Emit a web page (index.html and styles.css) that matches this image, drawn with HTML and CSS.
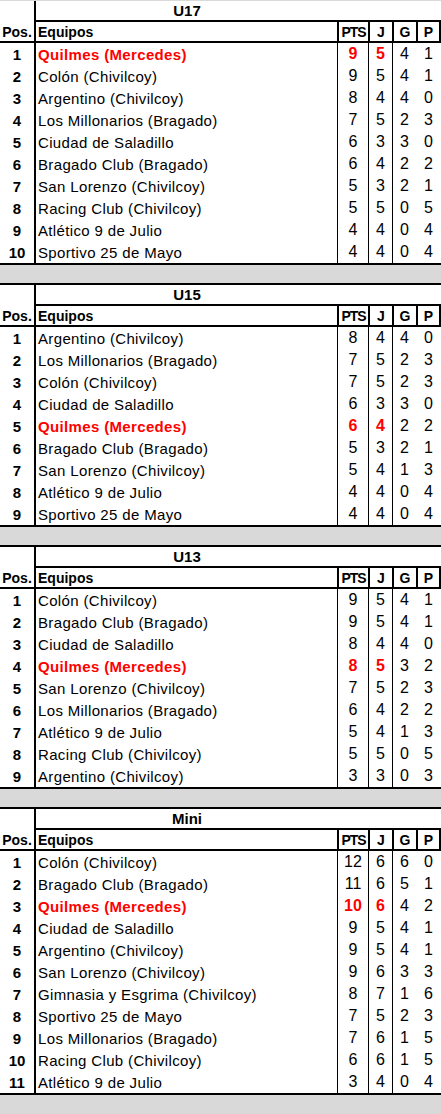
FILE: index.html
```html
<!DOCTYPE html>
<html lang="es">
<head>
<meta charset="utf-8">
<title>Posiciones</title>
<link rel="stylesheet" href="styles.css">
</head>
<body>
<div class="band band-top"></div>

<section class="table first">
  <div class="row title-row"><div class="pos"></div><div class="title">U17</div></div>
  <div class="row head-row"><div class="pos">Pos.</div><div class="name">Equipos</div><div class="num pts">PTS</div><div class="num">J</div><div class="num">G</div><div class="num last">P</div></div>
  <div class="row hl"><div class="pos">1</div><div class="name">Quilmes (Mercedes)</div><div class="num">9</div><div class="num">5</div><div class="num">4</div><div class="num">1</div></div>
  <div class="row"><div class="pos">2</div><div class="name">Colón (Chivilcoy)</div><div class="num">9</div><div class="num">5</div><div class="num">4</div><div class="num">1</div></div>
  <div class="row"><div class="pos">3</div><div class="name">Argentino (Chivilcoy)</div><div class="num">8</div><div class="num">4</div><div class="num">4</div><div class="num">0</div></div>
  <div class="row"><div class="pos">4</div><div class="name">Los Millonarios (Bragado)</div><div class="num">7</div><div class="num">5</div><div class="num">2</div><div class="num">3</div></div>
  <div class="row"><div class="pos">5</div><div class="name">Ciudad de Saladillo</div><div class="num">6</div><div class="num">3</div><div class="num">3</div><div class="num">0</div></div>
  <div class="row"><div class="pos">6</div><div class="name">Bragado Club (Bragado)</div><div class="num">6</div><div class="num">4</div><div class="num">2</div><div class="num">2</div></div>
  <div class="row"><div class="pos">7</div><div class="name">San Lorenzo (Chivilcoy)</div><div class="num">5</div><div class="num">3</div><div class="num">2</div><div class="num">1</div></div>
  <div class="row"><div class="pos">8</div><div class="name">Racing Club (Chivilcoy)</div><div class="num">5</div><div class="num">5</div><div class="num">0</div><div class="num">5</div></div>
  <div class="row"><div class="pos">9</div><div class="name">Atlético 9 de Julio</div><div class="num">4</div><div class="num">4</div><div class="num">0</div><div class="num">4</div></div>
  <div class="row"><div class="pos">10</div><div class="name">Sportivo 25 de Mayo</div><div class="num">4</div><div class="num">4</div><div class="num">0</div><div class="num">4</div></div>
</section>
<div class="band"></div>

<section class="table">
  <div class="row title-row"><div class="pos"></div><div class="title">U15</div></div>
  <div class="row head-row"><div class="pos">Pos.</div><div class="name">Equipos</div><div class="num pts">PTS</div><div class="num">J</div><div class="num">G</div><div class="num last">P</div></div>
  <div class="row"><div class="pos">1</div><div class="name">Argentino (Chivilcoy)</div><div class="num">8</div><div class="num">4</div><div class="num">4</div><div class="num">0</div></div>
  <div class="row"><div class="pos">2</div><div class="name">Los Millonarios (Bragado)</div><div class="num">7</div><div class="num">5</div><div class="num">2</div><div class="num">3</div></div>
  <div class="row"><div class="pos">3</div><div class="name">Colón (Chivilcoy)</div><div class="num">7</div><div class="num">5</div><div class="num">2</div><div class="num">3</div></div>
  <div class="row"><div class="pos">4</div><div class="name">Ciudad de Saladillo</div><div class="num">6</div><div class="num">3</div><div class="num">3</div><div class="num">0</div></div>
  <div class="row hl"><div class="pos">5</div><div class="name">Quilmes (Mercedes)</div><div class="num">6</div><div class="num">4</div><div class="num">2</div><div class="num">2</div></div>
  <div class="row"><div class="pos">6</div><div class="name">Bragado Club (Bragado)</div><div class="num">5</div><div class="num">3</div><div class="num">2</div><div class="num">1</div></div>
  <div class="row"><div class="pos">7</div><div class="name">San Lorenzo (Chivilcoy)</div><div class="num">5</div><div class="num">4</div><div class="num">1</div><div class="num">3</div></div>
  <div class="row"><div class="pos">8</div><div class="name">Atlético 9 de Julio</div><div class="num">4</div><div class="num">4</div><div class="num">0</div><div class="num">4</div></div>
  <div class="row"><div class="pos">9</div><div class="name">Sportivo 25 de Mayo</div><div class="num">4</div><div class="num">4</div><div class="num">0</div><div class="num">4</div></div>
</section>
<div class="band"></div>

<section class="table">
  <div class="row title-row"><div class="pos"></div><div class="title">U13</div></div>
  <div class="row head-row"><div class="pos">Pos.</div><div class="name">Equipos</div><div class="num pts">PTS</div><div class="num">J</div><div class="num">G</div><div class="num last">P</div></div>
  <div class="row"><div class="pos">1</div><div class="name">Colón (Chivilcoy)</div><div class="num">9</div><div class="num">5</div><div class="num">4</div><div class="num">1</div></div>
  <div class="row"><div class="pos">2</div><div class="name">Bragado Club (Bragado)</div><div class="num">9</div><div class="num">5</div><div class="num">4</div><div class="num">1</div></div>
  <div class="row"><div class="pos">3</div><div class="name">Ciudad de Saladillo</div><div class="num">8</div><div class="num">4</div><div class="num">4</div><div class="num">0</div></div>
  <div class="row hl"><div class="pos">4</div><div class="name">Quilmes (Mercedes)</div><div class="num">8</div><div class="num">5</div><div class="num">3</div><div class="num">2</div></div>
  <div class="row"><div class="pos">5</div><div class="name">San Lorenzo (Chivilcoy)</div><div class="num">7</div><div class="num">5</div><div class="num">2</div><div class="num">3</div></div>
  <div class="row"><div class="pos">6</div><div class="name">Los Millonarios (Bragado)</div><div class="num">6</div><div class="num">4</div><div class="num">2</div><div class="num">2</div></div>
  <div class="row"><div class="pos">7</div><div class="name">Atlético 9 de Julio</div><div class="num">5</div><div class="num">4</div><div class="num">1</div><div class="num">3</div></div>
  <div class="row"><div class="pos">8</div><div class="name">Racing Club (Chivilcoy)</div><div class="num">5</div><div class="num">5</div><div class="num">0</div><div class="num">5</div></div>
  <div class="row"><div class="pos">9</div><div class="name">Argentino (Chivilcoy)</div><div class="num">3</div><div class="num">3</div><div class="num">0</div><div class="num">3</div></div>
</section>
<div class="band"></div>

<section class="table">
  <div class="row title-row"><div class="pos"></div><div class="title">Mini</div></div>
  <div class="row head-row"><div class="pos">Pos.</div><div class="name">Equipos</div><div class="num pts">PTS</div><div class="num">J</div><div class="num">G</div><div class="num last">P</div></div>
  <div class="row"><div class="pos">1</div><div class="name">Colón (Chivilcoy)</div><div class="num">12</div><div class="num">6</div><div class="num">6</div><div class="num">0</div></div>
  <div class="row"><div class="pos">2</div><div class="name">Bragado Club (Bragado)</div><div class="num">11</div><div class="num">6</div><div class="num">5</div><div class="num">1</div></div>
  <div class="row hl"><div class="pos">3</div><div class="name">Quilmes (Mercedes)</div><div class="num">10</div><div class="num">6</div><div class="num">4</div><div class="num">2</div></div>
  <div class="row"><div class="pos">4</div><div class="name">Ciudad de Saladillo</div><div class="num">9</div><div class="num">5</div><div class="num">4</div><div class="num">1</div></div>
  <div class="row"><div class="pos">5</div><div class="name">Argentino (Chivilcoy)</div><div class="num">9</div><div class="num">5</div><div class="num">4</div><div class="num">1</div></div>
  <div class="row"><div class="pos">6</div><div class="name">San Lorenzo (Chivilcoy)</div><div class="num">9</div><div class="num">6</div><div class="num">3</div><div class="num">3</div></div>
  <div class="row"><div class="pos">7</div><div class="name">Gimnasia y Esgrima (Chivilcoy)</div><div class="num">8</div><div class="num">7</div><div class="num">1</div><div class="num">6</div></div>
  <div class="row"><div class="pos">8</div><div class="name">Sportivo 25 de Mayo</div><div class="num">7</div><div class="num">5</div><div class="num">2</div><div class="num">3</div></div>
  <div class="row"><div class="pos">9</div><div class="name">Los Millonarios (Bragado)</div><div class="num">7</div><div class="num">6</div><div class="num">1</div><div class="num">5</div></div>
  <div class="row"><div class="pos">10</div><div class="name">Racing Club (Chivilcoy)</div><div class="num">6</div><div class="num">6</div><div class="num">1</div><div class="num">5</div></div>
  <div class="row"><div class="pos">11</div><div class="name">Atlético 9 de Julio</div><div class="num">3</div><div class="num">4</div><div class="num">0</div><div class="num">4</div></div>
</section>
<div class="band band-end"></div>
</body>
</html>
```

FILE: styles.css
```css
* { box-sizing: border-box; }
html, body { margin: 0; padding: 0; background: #ffffff; }
body {
  width: 441px;
  font-family: "Liberation Sans", Arial, sans-serif;
  font-size: 15px;
  color: #000;
}
.band { height: 18px; background: #d9d9d9; }
.band-top { height: 1px; }
.band-end { height: 22px; }

.table { border-top: 2px solid #000; border-bottom: 2px solid #000; }
.table.first { border-top: none; }

.row {
  display: grid;
  grid-template-columns: 34px 303px 31px 24px 24px 25px;
  height: 22px;
  align-items: stretch;
}
.row > div { display: flex; align-items: center; line-height: 1; }

.pos { justify-content: center; font-weight: bold; }
.name { border-left: 2px solid #000; padding-left: 2px; white-space: nowrap; letter-spacing: 0.35px; }
.num { justify-content: center; border-left: 1px solid #000; font-size: 16px; }
.row:not(.head-row) .num:nth-child(6) { border-left: none; }

.title-row { height: 21px; }
.title {
  grid-column: 2 / 7;
  justify-content: center;
  border-left: 2px solid #000;
  border-bottom: 2px solid #000;
  padding-right: 103px;
  font-weight: bold;
}

.head-row { height: 21px; border-bottom: 2px solid #000; font-weight: bold; }
.head-row > div { font-size: 14px; letter-spacing: 0; }
.head-row .num { border-left: 2px solid #000; }
.head-row .pts { letter-spacing: -1px; }
.head-row .last { border-right: 2px solid #000; }

.hl .name { color: #ff0000; font-weight: bold; }
.hl .num:nth-child(3), .hl .num:nth-child(4) { color: #ff0000; font-weight: bold; }
```
